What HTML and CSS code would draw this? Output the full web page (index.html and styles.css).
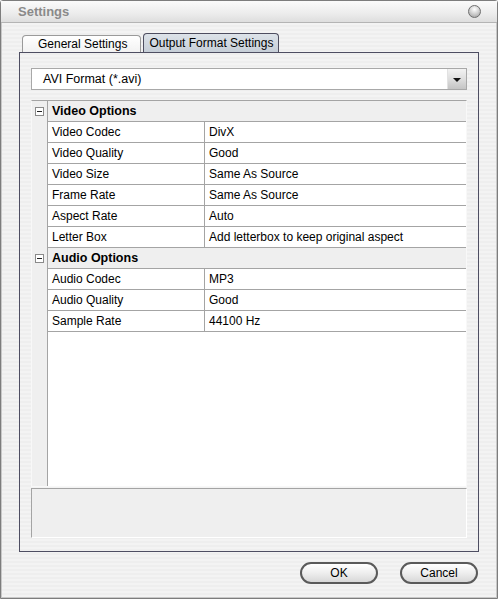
FILE: index.html
```html
<!DOCTYPE html>
<html>
<head>
<meta charset="utf-8">
<link rel="stylesheet" href="styles.css">
</head>
<body>
<div class="window">
  <div class="titlebar">
    <span class="title">Settings</span>
    <span class="close"></span>
  </div>
  <div class="main">
    <div class="tabs">
      <div class="tab">General Settings</div>
      <div class="tab active">Output Format Settings</div>
    </div>
    <div class="panel">
      <div class="combo">
        <span class="combo-text">AVI Format (*.avi)</span>
        <span class="combo-btn"><span class="arrow"></span></span>
      </div>
      <div class="grid">
        <div class="table">
          <div class="gutter">
            <div class="gcell"><span class="minus"></span></div>
            <div class="gcell"></div><div class="gcell"></div><div class="gcell"></div>
            <div class="gcell"></div><div class="gcell"></div><div class="gcell"></div>
            <div class="gcell"><span class="minus"></span></div>
          </div>
          <div class="rows">
            <div class="row head">Video Options</div>
            <div class="row"><span class="name">Video Codec</span><span class="val">DivX</span></div>
            <div class="row"><span class="name">Video Quality</span><span class="val">Good</span></div>
            <div class="row"><span class="name">Video Size</span><span class="val">Same As Source</span></div>
            <div class="row"><span class="name">Frame Rate</span><span class="val">Same As Source</span></div>
            <div class="row"><span class="name">Aspect Rate</span><span class="val">Auto</span></div>
            <div class="row"><span class="name">Letter Box</span><span class="val">Add letterbox to keep original aspect</span></div>
            <div class="row head">Audio Options</div>
            <div class="row"><span class="name">Audio Codec</span><span class="val">MP3</span></div>
            <div class="row"><span class="name">Audio Quality</span><span class="val">Good</span></div>
            <div class="row"><span class="name">Sample Rate</span><span class="val">44100 Hz</span></div>
          </div>
        </div>
        <div class="desc"></div>
      </div>
    </div>
    <div class="footer">
      <button class="btn">OK</button>
      <button class="btn">Cancel</button>
    </div>
  </div>
</div>
</body>
</html>
```
FILE: styles.css
```css
html, body {
  margin: 0;
  padding: 0;
  background: #ececec;
}
body {
  font-family: "Liberation Sans", Arial, sans-serif;
  font-size: 12px;
  color: #000;
}
.window {
  width: 498px;
  height: 599px;
  box-sizing: border-box;
  border: 1px solid #7d7d7d;
  border-radius: 3px 3px 0 0;
  box-shadow: inset 1px 0 0 #c8c8c8, inset -1px 0 0 #c8c8c8, inset 0 -1px 0 #c8c8c8;
  background: repeating-linear-gradient(180deg, #eeeeee 0 2px, #f3f3f3 2px 4px);
  display: flex;
  flex-direction: column;
}
.titlebar {
  height: 21px;
  flex: none;
  display: flex;
  align-items: center;
  justify-content: space-between;
  padding: 0 16px 0 17px;
  background: linear-gradient(180deg, #fbfbfb 0%, #ececec 60%, #dedede 100%);
  border-bottom: 1px solid #b4b4b4;
}
.title {
  font-weight: bold;
  font-size: 13px;
  color: #8a8a8a;
}
.close {
  width: 13px;
  height: 13px;
  border-radius: 50%;
  box-sizing: border-box;
  border: 1px solid #6e6e6e;
  background: radial-gradient(circle at 50% 30%, #ffffff 0%, #d4d4d4 45%, #9a9a9a 100%);
}
.main {
  flex: 1;
  display: flex;
  flex-direction: column;
  padding: 10px 18px 0 18px;
}
.tabs {
  display: flex;
  align-items: flex-end;
  padding-left: 3px;
  height: 19px;
  gap: 2px;
}
.tab {
  height: 17px;
  box-sizing: border-box;
  padding: 1px 13px 0 15px;
  border: 1px solid #9a9a9a;
  border-bottom: none;
  border-radius: 4px 4px 0 0;
  background: linear-gradient(180deg, #ffffff 0%, #f2f2f2 100%);
  line-height: 15px;
}
.tab.active {
  height: 19px;
  padding: 1px 5px 0 5px;
  border-color: #4e4e60;
  background: linear-gradient(180deg, #dde3e9 0%, #c6ced7 100%);
  line-height: 16px;
}
.panel {
  height: 500px;
  box-sizing: border-box;
  border: 1px solid #4e4e62;
  padding: 15px 11px 0 11px;
  display: flex;
  flex-direction: column;
  gap: 10px;
}
.combo {
  height: 22px;
  box-sizing: border-box;
  border: 1px solid #a8a8a8;
  background: #fff;
  display: flex;
  align-items: center;
  justify-content: space-between;
}
.combo-text {
  padding-left: 11px;
  font-size: 12.5px;
}
.combo-btn {
  width: 18px;
  height: 20px;
  border-left: 1px solid #e2e2e2;
  background: linear-gradient(180deg, #f2f2f2 0%, #dedede 50%, #c4c4c4 100%);
  display: flex;
  align-items: center;
  justify-content: center;
}
.arrow {
  width: 0;
  height: 0;
  border-left: 4px solid transparent;
  border-right: 4px solid transparent;
  border-top: 4px solid #111;
  margin-top: 1px;
}
.grid {
  width: 436px;
  display: flex;
  flex-direction: column;
}
.table {
  height: 387px;
  box-sizing: border-box;
  border-top: 1px solid #a4a4a4;
  border-left: 1px solid #f8f8f8;
  border-right: 1px solid #f8f8f8;
  border-bottom: 1px solid #f8f8f8;
  display: flex;
  background: #fff;
}
.gutter {
  width: 15px;
  flex: none;
  background: #efefef;
  border-right: 1px solid #a4a4a4;
}
.gcell {
  height: 21px;
  display: flex;
  align-items: center;
  padding-left: 3px;
}
.minus {
  width: 9px;
  height: 9px;
  box-sizing: border-box;
  border: 1px solid #8a8a8a;
  background: #fff;
  position: relative;
}
.minus::after {
  content: "";
  position: absolute;
  left: 1px;
  top: 3px;
  width: 5px;
  height: 1px;
  background: #222;
}
.rows {
  flex: 1;
}
.row {
  height: 21px;
  box-sizing: border-box;
  border-bottom: 1px solid #a4a4a4;
  display: flex;
  align-items: center;
}
.row.head {
  background: #efefef;
  font-weight: bold;
  padding-left: 4px;
  font-size: 12.5px;
}
.name {
  width: 157px;
  box-sizing: border-box;
  height: 100%;
  padding-left: 4px;
  border-right: 1px solid #a4a4a4;
  display: flex;
  align-items: center;
}
.val {
  padding-left: 4px;
}
.desc {
  margin-top: 1px;
  height: 50px;
  box-sizing: border-box;
  border-top: 1px solid #a4a4a4;
  border-left: 1px solid #a4a4a4;
  border-right: 1px solid #ffffff;
  border-bottom: 1px solid #ffffff;
  background: #efefef;
}
.footer {
  display: flex;
  justify-content: flex-end;
  gap: 22px;
  padding-top: 10px;
  padding-right: 1px;
}
.btn {
  width: 78px;
  height: 22px;
  border: 2px solid #5a5a5a;
  border-radius: 11px;
  background: linear-gradient(180deg, #ffffff 0%, #f0f0f0 45%, #d8d8d8 100%);
  font-family: "Liberation Sans", Arial, sans-serif;
  font-size: 12px;
  color: #000;
  padding: 0;
}
```
